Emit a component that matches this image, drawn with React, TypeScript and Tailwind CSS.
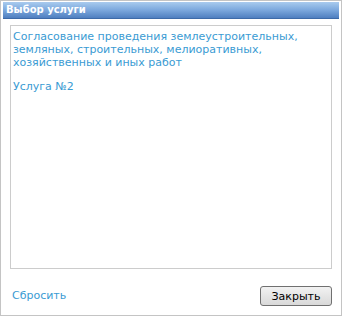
export default function App() {
  return (
    <div className="w-[342px] h-[316px] bg-white border border-[#c4c4c4] p-px flex flex-col font-['DejaVu_Sans',Verdana,sans-serif]">
      {/* Заголовок */}
      <div className="h-[17px] mx-px bg-gradient-to-b from-[#a9cbee] via-[#7ca8dd] to-[#4f7fc0] border-b border-[#3d6aa8] flex items-center px-[3px]">
        <span className="text-white text-[10px] font-bold leading-none">Выбор услуги</span>
      </div>

      <div className="flex-1 flex flex-col px-[8px] pt-[6px] pb-[8px]">
        <div className="h-[244px] border border-[#cccccc] px-[2px] pt-[4px] text-[11px] leading-[13px] text-[#3a9bd3]">
          <p>Согласование проведения землеустроительных, земляных, строительных, мелиоративных, хозяйственных и иных работ</p>
          <p className="mt-[11px]">Услуга №2</p>
        </div>

        <div className="flex items-center justify-between mt-auto pl-[2px]">
          <a className="text-[11px] text-[#3a9bd3] cursor-pointer">Сбросить</a>
          <button className="w-[72px] h-[20px] rounded-[3px] border border-[#707070] bg-gradient-to-b from-[#f2f2f2] to-[#d9d9d9] text-[11px] text-black leading-none">
            Закрыть
          </button>
        </div>
      </div>
    </div>
  );
}
